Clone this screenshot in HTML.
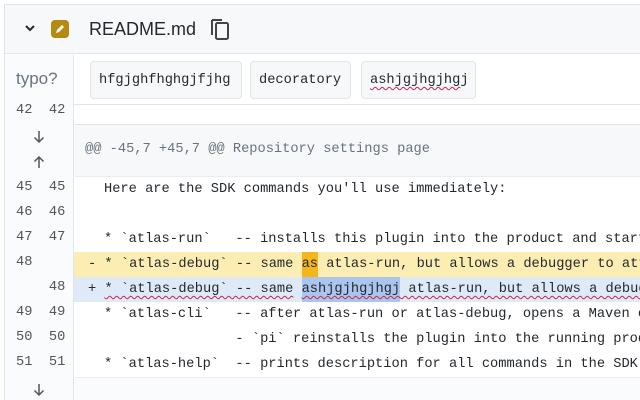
<!DOCTYPE html>
<html><head><meta charset="utf-8"><style>
*{margin:0;padding:0;box-sizing:border-box}
body{width:640px;height:400px;overflow:hidden;background:#fff;position:relative;font-family:"Liberation Sans",sans-serif}
.a{position:absolute}
.mono{font-family:"Liberation Mono",monospace;font-size:13.7px;white-space:pre;color:#24292e}
.ln{position:absolute;font-family:"Liberation Mono",monospace;font-size:13.7px;color:#555;white-space:pre}
.row{position:absolute;left:74px;right:0;height:25px;line-height:25px;padding-left:88px;overflow:hidden}
.chip{position:absolute;top:61px;height:38px;line-height:38px;border:1px solid #e1e4e8;border-radius:4px;background:#f6f8fa;padding:0 8px}
.sq{text-decoration:underline wavy #d0224a;text-decoration-thickness:1px;text-underline-offset:3px}
.hl{display:inline-block;height:25px}
</style></head><body>
<div class="a" style="left:4px;top:4px;right:0;bottom:0;border-left:1px solid #e1e4e8;border-top:1px solid #e1e4e8"></div>
<div class="a" style="left:5px;top:5px;right:0;height:49px;background:#f6f8fa;border-bottom:1px solid #e1e4e8"></div>
<svg class="a" style="left:24px;top:23px" width="12" height="10"><path d="M2 3l4 4 4-4" stroke="#24292e" stroke-width="2" fill="none"/></svg>
<svg class="a" style="left:51px;top:20px" width="18" height="18"><rect x="0" y="0" width="18" height="18" rx="4" fill="#b58a10"/><path d="M5 13l1-3 5-5 2 2-5 5z" fill="#fff"/></svg>
<div class="a" style="left:89px;top:19px;font-size:18px;color:#24292e">README.md</div>
<svg class="a" style="left:209px;top:17px" width="22" height="24"><path d="M3 3v15" stroke="#444" stroke-width="2" fill="none"/><rect x="7" y="6" width="12" height="16" rx="1.5" stroke="#444" stroke-width="2" fill="none"/><path d="M3 3h10" stroke="#444" stroke-width="2"/></svg>
<div class="a" style="left:5px;top:55px;width:69px;bottom:0;background:#fafbfc;border-right:1px solid #e1e4e8"></div>
<div class="a" style="left:16px;top:69px;font-size:17px;color:#6a737d">typo?</div>
<div class="a" style="left:74px;top:104px;right:0;border-top:1px solid #e1e4e8"></div>
<div class="chip mono" style="left:90px;width:152px">hfgjghfhghgjfjhg</div>
<div class="chip mono" style="left:250px;width:101px">decoratory</div>
<div class="chip mono" style="left:361px;width:115px"><span class="sq">ashjgjhgjhg</span>j</div>
<div class="ln" style="left:16px;top:103px">42  42</div>
<div class="a" style="left:75px;top:124px;right:0;height:53px;background:#f6f8fa;border-top:1px solid #e1e4e8;border-bottom:1px solid #eaecef"></div>
<div class="a mono" style="left:85px;top:142px;color:#6a737d">@@ -45,7 +45,7 @@ Repository settings page</div>
<svg class="a" style="left:33px;top:130px" width="12" height="14"><path d="M6 1v11M1.5 7.5L6 12l4.5-4.5" stroke="#555" stroke-width="1.5" fill="none"/></svg>
<svg class="a" style="left:33px;top:155px" width="12" height="14"><path d="M6 13V2M1.5 6.5L6 2l4.5 4.5" stroke="#555" stroke-width="1.5" fill="none"/></svg>
<div class="row mono" style="top:177px;padding-left:30px">Here are the SDK commands you'll use immediately:</div>
<div class="row mono" style="top:202px"></div>
<div class="row mono" style="top:227px;padding-left:30px">* `atlas-run`   -- installs this plugin into the product and starts it</div>
<div class="row mono" style="top:252px;padding-left:14px;background:#fcedb3">- * `atlas-debug` -- same <span class="hl" style="background:#f4b61b">as</span> atlas-run, but allows a debugger to attach</div>
<div class="row mono" style="top:277px;padding-left:14px;background:#dfeaf8">+ <span class="sq">* `atlas-debug` -- same</span> <span class="sq hl" style="background:#abc6ee">ashjgjhgjhgj</span><span class="sq"> atlas-run, but allows a debugger</span></div>
<div class="row mono" style="top:302px;padding-left:30px">* `atlas-cli`   -- after atlas-run or atlas-debug, opens a Maven command</div>
<div class="row mono" style="top:327px;padding-left:30px">                - `pi` reinstalls the plugin into the running product</div>
<div class="row mono" style="top:352px;padding-left:30px">* `atlas-help`  -- prints description for all commands in the SDK</div>
<div class="ln" style="left:16px;top:180px">45  45</div>
<div class="ln" style="left:16px;top:205px">46  46</div>
<div class="ln" style="left:16px;top:230px">47  47</div>
<div class="ln" style="left:16px;top:255px">48</div>
<div class="ln" style="left:16px;top:280px">    48</div>
<div class="ln" style="left:16px;top:305px">49  49</div>
<div class="ln" style="left:16px;top:330px">50  50</div>
<div class="ln" style="left:16px;top:355px">51  51</div>
<div class="a" style="left:75px;top:377px;right:0;height:23px;background:#fafbfc;border-top:1px solid #eaecef"></div>
<svg class="a" style="left:33px;top:383px" width="12" height="14"><path d="M6 1v11M1.5 7.5L6 12l4.5-4.5" stroke="#555" stroke-width="1.5" fill="none"/></svg>
</body></html>
